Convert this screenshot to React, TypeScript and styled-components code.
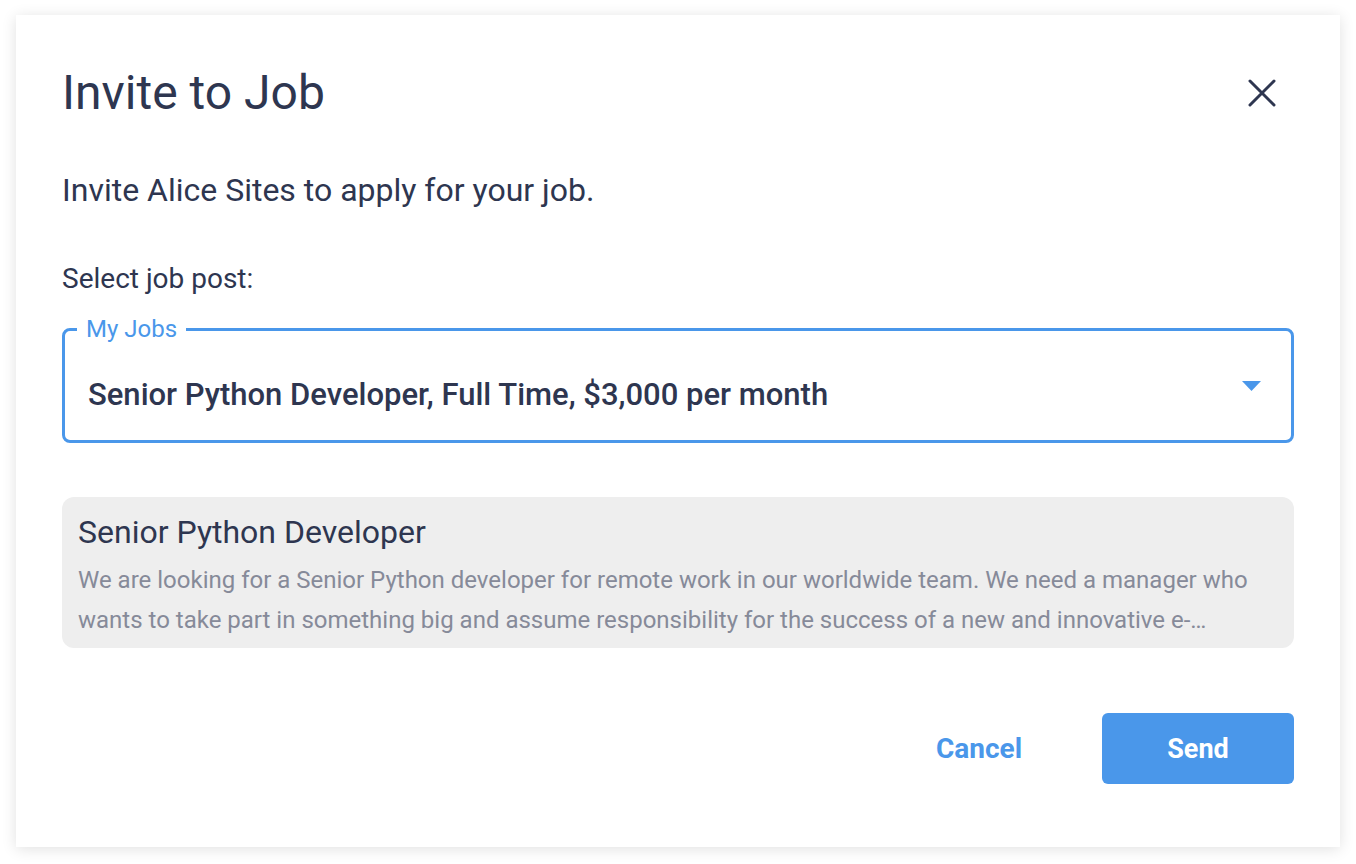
import React from 'react';
import styled, { createGlobalStyle } from 'styled-components';

const GlobalStyle = createGlobalStyle`
  html, body {
    margin: 0;
    padding: 0;
    background: #ffffff;
  }
  body {
    font-family: Roboto, "Noto Sans", "Liberation Sans", sans-serif;
    color: #2e3650;
  }
`;

const job = {
  title: 'Senior Python Developer',
  option: 'Senior Python Developer, Full Time, $3,000 per month',
  description:
    'We are looking for a Senior Python developer for remote work in our worldwide team. We need a manager who wants to take part in something big and assume responsibility for the success of a new and innovative e-commerce platform that is growing fast across many markets.',
};

const CloseIcon = () => (
  <svg width="28" height="28" viewBox="0 0 28 28" fill="none">
    <path
      d="M2 2L26 26M26 2L2 26"
      stroke="#2e3650"
      strokeWidth="3"
      strokeLinecap="round"
    />
  </svg>
);

const Caret = () => (
  <svg width="19" height="10" viewBox="0 0 19 10">
    <path d="M0 0H19L9.5 10Z" fill="#4a97ea" />
  </svg>
);

const App = () => {
  return (
    <>
      <GlobalStyle />
      <Dialog>
        <Header>
          <Title>Invite to Job</Title>
          <CloseButton aria-label="Close">
            <CloseIcon />
          </CloseButton>
        </Header>

        <Lead>Invite Alice Sites to apply for your job.</Lead>

        <FieldLabel>Select job post:</FieldLabel>

        <SelectBox>
          <FloatingLabel>My Jobs</FloatingLabel>
          <SelectValue>{job.option}</SelectValue>
          <Caret />
        </SelectBox>

        <JobCard>
          <JobTitle>{job.title}</JobTitle>
          <JobDescription>{job.description}</JobDescription>
        </JobCard>

        <Actions>
          <TextButton>Cancel</TextButton>
          <PrimaryButton>Send</PrimaryButton>
        </Actions>
      </Dialog>
    </>
  );
};

export default App;

const Dialog = styled.div`
  box-sizing: border-box;
  margin: 15px 16px;
  width: 1324px;
  height: 832px;
  padding: 50px 46px 63px;
  background: #ffffff;
  box-shadow: 0 2px 14px rgba(0, 0, 0, 0.12);
  display: flex;
  flex-direction: column;
`;

const Header = styled.div`
  display: flex;
  align-items: center;
  justify-content: space-between;
  height: 56px;
`;

const Title = styled.h1`
  margin: 0;
  font-size: 48px;
  line-height: 56px;
  font-weight: 400;
  color: #2e3650;
`;

const CloseButton = styled.button`
  width: 40px;
  height: 40px;
  margin-right: 12px;
  padding: 0;
  border: 0;
  background: none;
  display: flex;
  align-items: center;
  justify-content: center;
  cursor: pointer;
`;

const Lead = styled.p`
  margin: 49px 0 0;
  font-size: 32px;
  line-height: 40px;
  color: #2e3650;
`;

const FieldLabel = styled.div`
  margin-top: 53px;
  font-size: 28px;
  line-height: 32px;
  color: #2e3650;
`;

const SelectBox = styled.div`
  position: relative;
  box-sizing: border-box;
  margin-top: 33px;
  height: 115px;
  border: 3px solid #4a97ea;
  border-radius: 8px;
  padding: 0 30px 0 23px;
  display: flex;
  align-items: center;
  justify-content: space-between;
`;

const FloatingLabel = styled.span`
  position: absolute;
  top: -16px;
  left: 12px;
  padding: 0 9px;
  background: #ffffff;
  font-size: 24px;
  line-height: 28px;
  color: #4a97ea;
`;

const SelectValue = styled.span`
  margin-top: 17px;
  font-size: 31px;
  font-weight: 500;
  color: #2e3650;
`;

const JobCard = styled.div`
  margin-top: 54px;
  background: #eeeeee;
  border-radius: 12px;
  padding: 17px 16px 8px;
`;

const JobTitle = styled.div`
  font-size: 32px;
  line-height: 36px;
  color: #2e3650;
`;

const JobDescription = styled.p`
  margin: 10px 0 0;
  font-size: 24px;
  line-height: 40px;
  color: #868a99;
  display: -webkit-box;
  -webkit-line-clamp: 2;
  -webkit-box-orient: vertical;
  overflow: hidden;
`;

const Actions = styled.div`
  margin-top: auto;
  display: flex;
  justify-content: flex-end;
  align-items: center;
  gap: 41px;
`;

const TextButton = styled.button`
  width: 164px;
  height: 71px;
  border: 0;
  background: none;
  font-family: inherit;
  font-size: 28px;
  font-weight: 700;
  color: #4a97ea;
  cursor: pointer;
`;

const PrimaryButton = styled.button`
  width: 192px;
  height: 71px;
  border: 0;
  border-radius: 6px;
  background: #4a97ea;
  font-family: inherit;
  font-size: 27px;
  font-weight: 700;
  color: #ffffff;
  cursor: pointer;
`;
